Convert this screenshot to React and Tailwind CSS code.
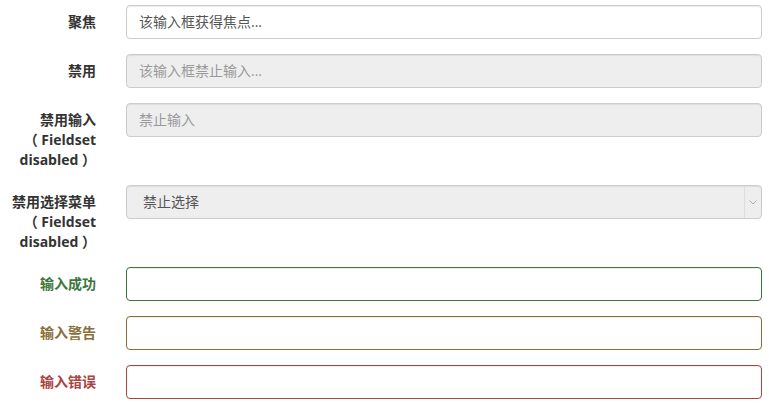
import React from "react";

const font = { fontFamily: '"Open Sans", "Noto Sans CJK SC", sans-serif' };

function Row({ label, labelClass = "text-[#333]", children }) {
  return (
    <div className="flex items-start mb-[15px]">
      <label className={`w-[96px] shrink-0 text-right font-bold text-[14px] leading-[20px] pt-[7px] ${labelClass}`}>
        {label}
      </label>
      <div className="ml-[30px] flex-1">{children}</div>
    </div>
  );
}

const base =
  "w-full h-[34px] px-[12px] py-[6px] text-[14px] leading-[20px] rounded-[4px] border shadow-[inset_0_1px_1px_rgba(0,0,0,0.075)] outline-none";

export default function App() {
  return (
    <div className="w-[769px] h-[410px] bg-white pt-[5px] pr-[7px] overflow-hidden" style={font}>
      <Row label="聚焦">
        <div className={`${base} border-[#ccc] bg-white text-[#555] flex items-center`}>该输入框获得焦点...</div>
      </Row>
      <Row label="禁用">
        <div className={`${base} border-[#ccc] bg-[#eee] text-[#999] flex items-center`}>该输入框禁止输入...</div>
      </Row>
      <Row
        label={
          <>
            禁用输入
            <br />（ Fieldset
            <br />
            disabled ）
          </>
        }
      >
        <div className={`${base} border-[#ccc] bg-[#eee] text-[#999] flex items-center`}>禁止输入</div>
      </Row>
      <Row
        label={
          <>
            禁用选择菜单
            <br />（ Fieldset
            <br />
            disabled ）
          </>
        }
      >
        <div className={`${base} border-[#ccc] bg-[#eee] text-[#555] flex items-center !pr-0 !pl-[16px]`}>
          <span className="flex-1">禁止选择</span>
          <span className="w-[17px] h-[32px] border-l border-[#ddd] flex items-center justify-center">
            <svg width="8" height="5" viewBox="0 0 8 5">
              <path d="M0.5 0.5 L4 4 L7.5 0.5" fill="none" stroke="#aaa" strokeWidth="1" />
            </svg>
          </span>
        </div>
      </Row>
      <Row label="输入成功" labelClass="text-[#3c763d]">
        <div className={`${base} border-[#3c763d] bg-white`} />
      </Row>
      <Row label="输入警告" labelClass="text-[#8a6d3b]">
        <div className={`${base} border-[#8a6d3b] bg-white`} />
      </Row>
      <Row label="输入错误" labelClass="text-[#a94442]">
        <div className={`${base} border-[#a94442] bg-white`} />
      </Row>
    </div>
  );
}
